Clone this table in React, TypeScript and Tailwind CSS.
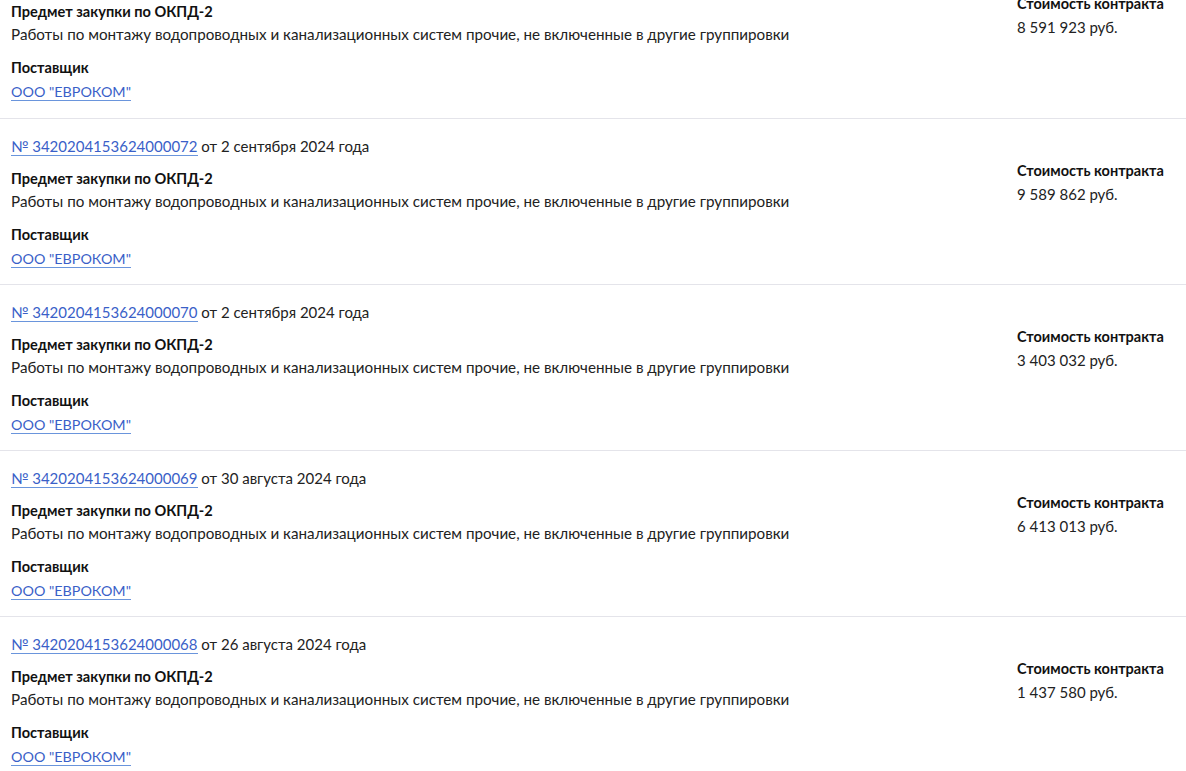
import React from "react";

const items = [
  { num: null as string | null, date: "", price: "8 591 923 руб." },
  { num: "3420204153624000072", date: "от 2 сентября 2024 года", price: "9 589 862 руб." },
  { num: "3420204153624000070", date: "от 2 сентября 2024 года", price: "3 403 032 руб." },
  { num: "3420204153624000069", date: "от 30 августа 2024 года", price: "6 413 013 руб." },
  { num: "3420204153624000068", date: "от 26 августа 2024 года", price: "1 437 580 руб." },
];

function Item({ num, date, price, first }: { num: string | null; date: string; price: string; first?: boolean }) {
  return (
    <div className={`flex h-[166px] ${first ? "" : "border-t border-[#e4e4ea]"}`}>
      <div className="flex-1 pl-[11px] pt-[16px]">
        <div className="h-[22px] leading-[22px] text-[15px] text-[#222]">
          {num && (
            <>
              <a className="text-[#3a5fc8] border-b border-[#6a95dc]">№ {num}</a> {date}
            </>
          )}
        </div>
        <div className="mt-[11px] h-[22px] leading-[22px] text-[14.6px] font-bold text-[#111]">Предмет закупки по ОКПД-2</div>
        <div className="mt-0 h-[22px] leading-[22px] text-[15.2px] text-[#222]">
          Работы по монтажу водопроводных и канализационных систем прочие, не включенные в другие группировки
        </div>
        <div className="mt-[12px] h-[22px] leading-[22px] text-[14.6px] font-bold text-[#111]">Поставщик</div>
        <div className="mt-[2px] h-[22px] leading-[22px] text-[14.3px]">
          <a className="text-[#3a5fc8] border-b border-[#6a95dc]">ООО "ЕВРОКОМ"</a>
        </div>
      </div>
      <div className="w-[169px] pt-[41px]">
        <div className="h-[22px] leading-[22px] text-[14.5px] font-bold text-[#111] whitespace-nowrap">Стоимость контракта</div>
        <div className="mt-[1px] h-[22px] leading-[22px] text-[15px] text-[#222]">{price}</div>
      </div>
    </div>
  );
}

export default function App() {
  return (
    <div className="bg-white w-[1186px] h-[771px] overflow-hidden" style={{ fontFamily: 'Lato, "Noto Sans", sans-serif' }}>
      <div className="mt-[-48px]">
        {items.map((it, i) => (
          <Item key={i} num={it.num} date={it.date} price={it.price} first={i === 0} />
        ))}
      </div>
    </div>
  );
}
